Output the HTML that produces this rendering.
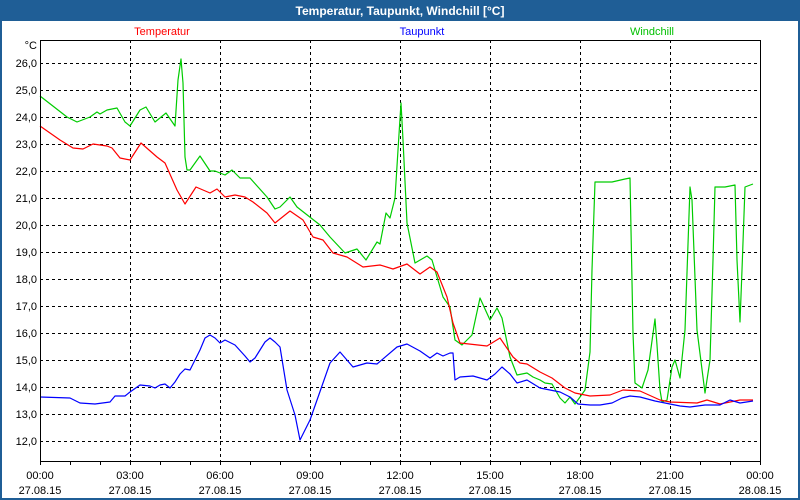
<!DOCTYPE html>
<html><head><meta charset="utf-8"><style>
html,body{margin:0;padding:0;width:800px;height:500px;overflow:hidden;background:#fff}
svg{display:block}
text{font-family:"Liberation Sans",sans-serif;font-size:11px}
</style></head><body>
<svg width="800" height="500" viewBox="0 0 800 500" xmlns="http://www.w3.org/2000/svg">
<rect x="0" y="0" width="800" height="500" fill="#1f5e96"/>
<rect x="2" y="21" width="796" height="477" fill="#fff"/>
<text x="400" y="15" text-anchor="middle" fill="#fff" font-weight="bold" style="font-size:12px">Temperatur, Taupunkt, Windchill [°C]</text>
<text x="162" y="35" text-anchor="middle" fill="#ff0000">Temperatur</text>
<text x="422" y="35" text-anchor="middle" fill="#0000ff">Taupunkt</text>
<text x="652" y="35" text-anchor="middle" fill="#00c000">Windchill</text>
<g shape-rendering="crispEdges" stroke="#000" stroke-width="1" stroke-dasharray="3,3">
<line x1="40" y1="63.5" x2="760" y2="63.5"/><line x1="40" y1="90.5" x2="760" y2="90.5"/><line x1="40" y1="117.5" x2="760" y2="117.5"/><line x1="40" y1="144.5" x2="760" y2="144.5"/><line x1="40" y1="171.5" x2="760" y2="171.5"/><line x1="40" y1="198.5" x2="760" y2="198.5"/><line x1="40" y1="225.5" x2="760" y2="225.5"/><line x1="40" y1="252.5" x2="760" y2="252.5"/><line x1="40" y1="279.5" x2="760" y2="279.5"/><line x1="40" y1="306.5" x2="760" y2="306.5"/><line x1="40" y1="333.5" x2="760" y2="333.5"/><line x1="40" y1="360.5" x2="760" y2="360.5"/><line x1="40" y1="387.5" x2="760" y2="387.5"/><line x1="40" y1="414.5" x2="760" y2="414.5"/><line x1="40" y1="441.5" x2="760" y2="441.5"/>
<line x1="130.5" y1="40" x2="130.5" y2="461"/><line x1="220.5" y1="40" x2="220.5" y2="461"/><line x1="310.5" y1="40" x2="310.5" y2="461"/><line x1="400.5" y1="40" x2="400.5" y2="461"/><line x1="490.5" y1="40" x2="490.5" y2="461"/><line x1="580.5" y1="40" x2="580.5" y2="461"/><line x1="670.5" y1="40" x2="670.5" y2="461"/>
</g>
<g fill="none" stroke-width="1.2" stroke-linejoin="round">
<polyline stroke="#00cc00" points="40,96 67,117 77,122 90,117 97,112 100,114 107,110 117,108 125,122 130,126 140,110 146,107 155,122 166,113 175,126 178,80 181,59 183,83 185,157 187,170 190,170 200,156 210,171 215,171 225,175 232,170 240,178 250,178 267,197 275,209 280,207 290,197 297,207 320,225 330,237 345,253 357,249 366,260 377,242 380,244 386,213 390,218 395,198 398,150 401,103 403,140 407,223 415,263 427,256 432,260 443,297 450,307 455,340 462,345 472,335 480,298 490,320 497,308 502,318 510,357 517,375 527,373 533,377 540,380 545,383 552,384 560,398 565,403 570,397 575,404 580,397 585,390 590,352 592,270 595,182 612,182 625,179 630,178 633,333 635,383 642,388 648,370 655,319 657,345 660,390 662,402 667,400 672,367 675,360 680,378 685,330 690,187 692,200 697,330 705,393 710,360 713,260 715,187 725,187 735,185 737,260 740,322 742,270 745,187 753,184"/>
<polyline stroke="#ff0000" points="40,126 60,140 73,148 83,149 93,144 107,146 112,148 120,158 130,160 141,143 157,157 165,163 177,190 185,204 196,187 210,193 217,189 225,197 235,195 245,197 253,202 267,213 275,223 290,211 303,220 313,237 323,240 333,253 347,257 363,267 380,265 393,269 407,264 420,274 430,267 437,272 447,297 453,323 460,343 487,346 500,338 513,357 520,363 527,364 540,372 552,378 565,388 575,393 590,396 610,395 623,390 640,391 660,400 670,402 697,403 707,400 720,404 740,400 753,400"/>
<polyline stroke="#0000ff" points="40,397 70,398 80,403 95,404 110,402 115,396 125,396 130,392 140,385 150,386 155,388 160,385 165,384 170,388 175,382 180,374 185,369 190,370 195,360 200,350 205,338 210,335 215,338 220,343 225,340 235,345 245,356 250,362 255,358 260,350 265,342 270,338 275,342 280,347 287,390 295,415 300,440 310,420 323,383 330,363 340,352 353,367 367,363 377,364 397,347 407,344 420,351 430,358 437,353 443,356 450,353 453,353 455,380 460,377 473,376 487,380 495,374 502,367 510,374 517,383 527,380 540,388 560,392 570,397 578,404 590,405 600,405 612,403 622,398 630,396 640,397 655,401 670,404 680,406 690,407 705,405 720,405 730,400 740,403 753,401"/>
</g>
<g shape-rendering="crispEdges" stroke="#000" fill="none">
<rect x="40.5" y="40.5" width="720" height="421"/>
<path d="M70.5 461v4M100.5 461v4M130.5 461v4M160.5 461v4M190.5 461v4M220.5 461v4M250.5 461v4M280.5 461v4M310.5 461v4M340.5 461v4M370.5 461v4M400.5 461v4M430.5 461v4M460.5 461v4M490.5 461v4M520.5 461v4M550.5 461v4M580.5 461v4M610.5 461v4M640.5 461v4M670.5 461v4M700.5 461v4M730.5 461v4M40.5 461v4M760.5 461v4"/>
</g>
<g fill="#000" text-anchor="end">
<text x="37" y="49">°C</text>
<text x="37" y="67">26,0</text><text x="37" y="94">25,0</text><text x="37" y="121">24,0</text><text x="37" y="148">23,0</text><text x="37" y="175">22,0</text><text x="37" y="202">21,0</text><text x="37" y="229">20,0</text><text x="37" y="256">19,0</text><text x="37" y="283">18,0</text><text x="37" y="310">17,0</text><text x="37" y="337">16,0</text><text x="37" y="364">15,0</text><text x="37" y="391">14,0</text><text x="37" y="418">13,0</text><text x="37" y="445">12,0</text>
</g>
<g fill="#000" text-anchor="middle">
<text x="40" y="479">00:00</text><text x="40" y="494">27.08.15</text>
<text x="130" y="479">03:00</text><text x="130" y="494">27.08.15</text>
<text x="220" y="479">06:00</text><text x="220" y="494">27.08.15</text>
<text x="310" y="479">09:00</text><text x="310" y="494">27.08.15</text>
<text x="400" y="479">12:00</text><text x="400" y="494">27.08.15</text>
<text x="490" y="479">15:00</text><text x="490" y="494">27.08.15</text>
<text x="580" y="479">18:00</text><text x="580" y="494">27.08.15</text>
<text x="670" y="479">21:00</text><text x="670" y="494">27.08.15</text>
<text x="760" y="479">00:00</text><text x="760" y="494">28.08.15</text>
</g>
</svg>
</body></html>
